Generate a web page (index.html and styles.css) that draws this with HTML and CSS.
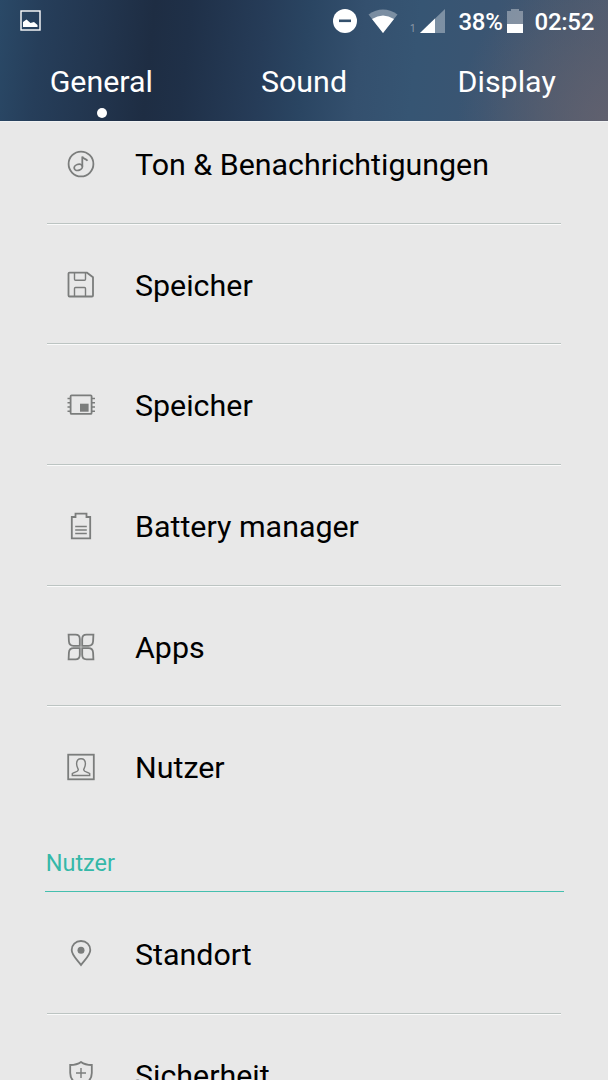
FILE: index.html
```html
<!DOCTYPE html>
<html lang="de">
<head>
  <meta charset="utf-8">
  <title>Einstellungen</title>
  <meta name="viewport" content="width=device-width, initial-scale=1">
  <link rel="stylesheet" href="styles.css">
</head>

<body>
  <header class="header">
    <div class="status-bar">
      <svg class="status-picture" width="21" height="21" viewBox="0 0 21 21">
        <rect x="1" y="1" width="19" height="19" fill="none" stroke="#fff" stroke-width="1.4"/>
        <path d="M3 17v-5l3.500-2.500 4 3.500 3.500-1 3.500 3v2z" fill="#fff"/>
      </svg>
      <svg class="status-dnd" width="24" height="24" viewBox="0 0 24 24">
        <circle cx="12" cy="12" r="12" fill="#fff"/>
        <rect x="6" y="10.500" width="12" height="2.600" fill="#34506c"/>
      </svg>
      <svg class="status-wifi" width="30" height="24" viewBox="0 0 30 24">
        <path d="M0.500 5.500Q15-4.500 29.500 5.500L15 24z" fill="#fff" opacity=".35"/>
        <path d="M4 10Q15 3 26 10L15 24z" fill="#fff"/>
      </svg>
      <span class="sim">1</span>
      <svg class="status-signal" width="25" height="24" viewBox="0 0 25 24">
        <path d="M0 24L25 0v24z" fill="#fff" opacity=".35"/>
        <path d="M0 24L15 9.500V24z" fill="#fff"/>
      </svg>
      <span class="battery-level">38%</span>
      <svg class="status-battery" width="16" height="24" viewBox="0 0 16 24">
        <path d="M0 2h4V0h8v2h4v13H0z" fill="#fff" opacity=".35"/>
        <rect y="15" width="16" height="9" fill="#fff"/>
      </svg>
      <span class="clock">02:52</span>
    </div>
    <nav class="tabs">
      <div class="tab active">General</div>
      <div class="tab">Sound</div>
      <div class="tab">Display</div>
    </nav>
  </header>

  <main class="settings">
    <ul class="list list-device">
      <li class="row">
        <svg class="icon" viewBox="0 0 30 30">
          <circle cx="15" cy="15" r="12.400"/>
          <path d="M16.300 17.500V7.500c.8 2.500 3.500 2 5.200 4.300"/>
          <ellipse cx="12.300" cy="18.300" rx="4.200" ry="3" transform="rotate(-20 12.300 18.300)"/>
        </svg>
        <span class="label">Ton &amp; Benachrichtigungen</span>
      </li>
      <li class="row">
        <svg class="icon" viewBox="0 0 30 30">
          <path d="M3.500 2.700H21l6 4.500V25.500q0 1-1 1H3.500q-1 0-1-1V3.500q0-.8 1-.8z"/>
          <path class="thin" d="M8.500 3v6.300q0 1 1 1h9q1 0 1-1V3M8.500 26v-7.500q0-1 1-1h9q1 0 1 1V26"/>
        </svg>
        <span class="label">Speicher</span>
      </li>
      <li class="row">
        <svg class="icon" viewBox="0 0 30 30">
          <rect x="4.600" y="5.300" width="21" height="18.600" rx="1"/>
          <path class="thin" d="M1.500 8.500H5M1.500 12.800H5M1.500 17H5M1.500 21.300H5M25.500 8.500H29M25.500 12.800H29M25.500 17H29M25.500 21.300H29"/>
          <rect class="solid" x="14" y="13.700" width="8.600" height="8"/>
        </svg>
        <span class="label">Speicher</span>
      </li>
      <li class="row">
        <svg class="icon" viewBox="0 0 30 30">
          <path d="M9.500 2.700h11v3.300h3.700v21.300H5.800V6h3.700z"/>
          <path class="thin" d="M9.200 15.500h11.600M9.200 19h11.600M9.200 22.500h11.600"/>
        </svg>
        <span class="label">Battery manager</span>
      </li>
      <li class="row">
        <svg class="icon" viewBox="0 0 30 30">
          <path d="M2.600 2.600H9.500q4.300 0 4.300 4.300v6.900H7.500q-4.300 0-4.600-4.500z"/>
          <path d="M27.400 2.600H20.500q-4.300 0-4.300 4.300v6.900H22.500q4.300 0 4.600-4.500z"/>
          <path d="M2.600 27.400H9.500q4.300 0 4.300-4.300v-6.900H7.500q-4.300 0-4.600 4.500z"/>
          <path d="M27.400 27.400H20.500q-4.300 0-4.300-4.300v-6.900H22.500q4.300 0 4.600 4.500z"/>
        </svg>
        <span class="label">Apps</span>
      </li>
      <li class="row">
        <svg class="icon" viewBox="0 0 30 30">
          <rect x="2.200" y="2.700" width="25.600" height="24.600"/>
          <path class="thin" d="M6.300 23.500v-2c2.500-1.700 5.700-1.500 6-3.700.1-1-1.700-2.500-1.700-6 0-3.500 1.700-5 4.400-5s4.400 1.500 4.400 5c0 3.500-1.800 5-1.700 6 .3 2.200 3.500 2 6 3.700v2z"/>
        </svg>
        <span class="label">Nutzer</span>
      </li>
    </ul>

    <h2 class="section-title">Nutzer</h2>
    <ul class="list list-user">
      <li class="row">
        <svg class="icon" viewBox="0 0 30 30">
          <path d="M15 26C12 21.500 5.700 16.500 5.700 11c0-5 3.800-9 9.300-9s9.300 4 9.300 9c0 5.500-6.300 10.500-9.300 15z"/>
          <circle class="solid" cx="15" cy="11.300" r="3.500"/>
        </svg>
        <span class="label">Standort</span>
      </li>
      <li class="row">
        <svg class="icon" viewBox="0 0 30 30">
          <path d="M15 2c3 2.200 7 3 10.800 3v8c0 6.500-4.500 10.500-10.800 13.700C8.700 23.500 4.200 19.500 4.200 13V5c3.800 0 7.800-.8 10.800-3z"/>
          <path class="thin" d="M15 8v10M10 13h10"/>
        </svg>
        <span class="label">Sicherheit</span>
      </li>
    </ul>
  </main>
</body>
</html>
```

FILE: styles.css
```css
html, body {
  height: 100%;
  margin: 0;
}

body {
  display: flex;
  flex-direction: column;
  overflow: hidden;
  background-color: #e8e8e8;
  font-family: Roboto, sans-serif;
  color: #000;
}

.header {
  flex: none;
  height: 121px;
  border-bottom: 1px solid #f0f2f3;
  background:
    radial-gradient(ellipse 150px 160px at 100% 100%, rgba(98, 97, 110, .9), rgba(98, 97, 110, 0)),
    linear-gradient(96deg, #2a4967 0%, #263e5a 7%, #22354e 17%, #1e2d43 25%, #1f3048 31%, #263c58 43%, #2a4562 50%, #34506e 59%, #365573 68%, #3b5572 80%, #46586f 92%, #4e5b70 100%);
  color: #fff;
}

.status-bar {
  display: flex;
  align-items: center;
  height: 41px;
  padding: 0 14px 0 20px;
}

.status-dnd {
  margin-left: auto;
}

.status-wifi {
  margin-left: 11px;
}

.sim {
  margin: 16px 4px 0 12px;
  font-size: 10px;
  color: #8d9aa8;
}

.battery-level,
.clock {
  position: relative;
  top: 1px;
  font-size: 24px;
  font-weight: 500;
  letter-spacing: -.3px;
}

.battery-level {
  margin-left: 14px;
}

.status-battery {
  margin-left: 4px;
}

.clock {
  margin-left: 12px;
}

.tabs {
  display: flex;
  height: 80px;
}

.tab {
  position: relative;
  flex: 1;
  font-size: 30.4px;
  line-height: 82px;
  text-align: center;
}

.tab.active::after {
  content: "";
  position: absolute;
  left: 50%;
  bottom: 3px;
  width: 10px;
  height: 10px;
  margin-left: -4px;
  border-radius: 50%;
  background: #fff;
}

.settings {
  flex: 1;
  min-height: 0;
  overflow: hidden;
}

.list {
  margin: 0;
  padding: 0 47px;
  list-style: none;
}

/* list is scrolled, first row is partly under the header */
.list-device {
  margin-top: -18px;
}

.list-user {
  padding-top: 2px;
}

.row {
  display: flex;
  align-items: center;
  box-sizing: border-box;
  height: 120.7px;
  padding-left: 19px;
  border-bottom: 1px solid #fafafa;
  box-shadow: inset 0 -1px #bcc4c2;
}

.list-device .row:last-child {
  border-color: transparent;
  box-shadow: none;
}

.icon {
  flex: none;
  width: 30px;
  height: 30px;
  margin-right: 39px;
  fill: none;
  stroke: #7b7d7c;
  stroke-width: 1.8;
}

.icon .thin {
  stroke-width: 1.4;
}

.icon .solid {
  fill: #7b7d7c;
  stroke: none;
}

.label {
  padding-top: 2px;
  font-size: 30.4px;
  line-height: 36px;
}

.section-title {
  box-sizing: border-box;
  height: 64px;
  margin: 0 44px 0 45px;
  border-bottom: 1px solid #45bfae;
  font-size: 23.5px;
  font-weight: 400;
  line-height: 70px;
  text-indent: .7px;
  color: #35b8a8;
}
```
